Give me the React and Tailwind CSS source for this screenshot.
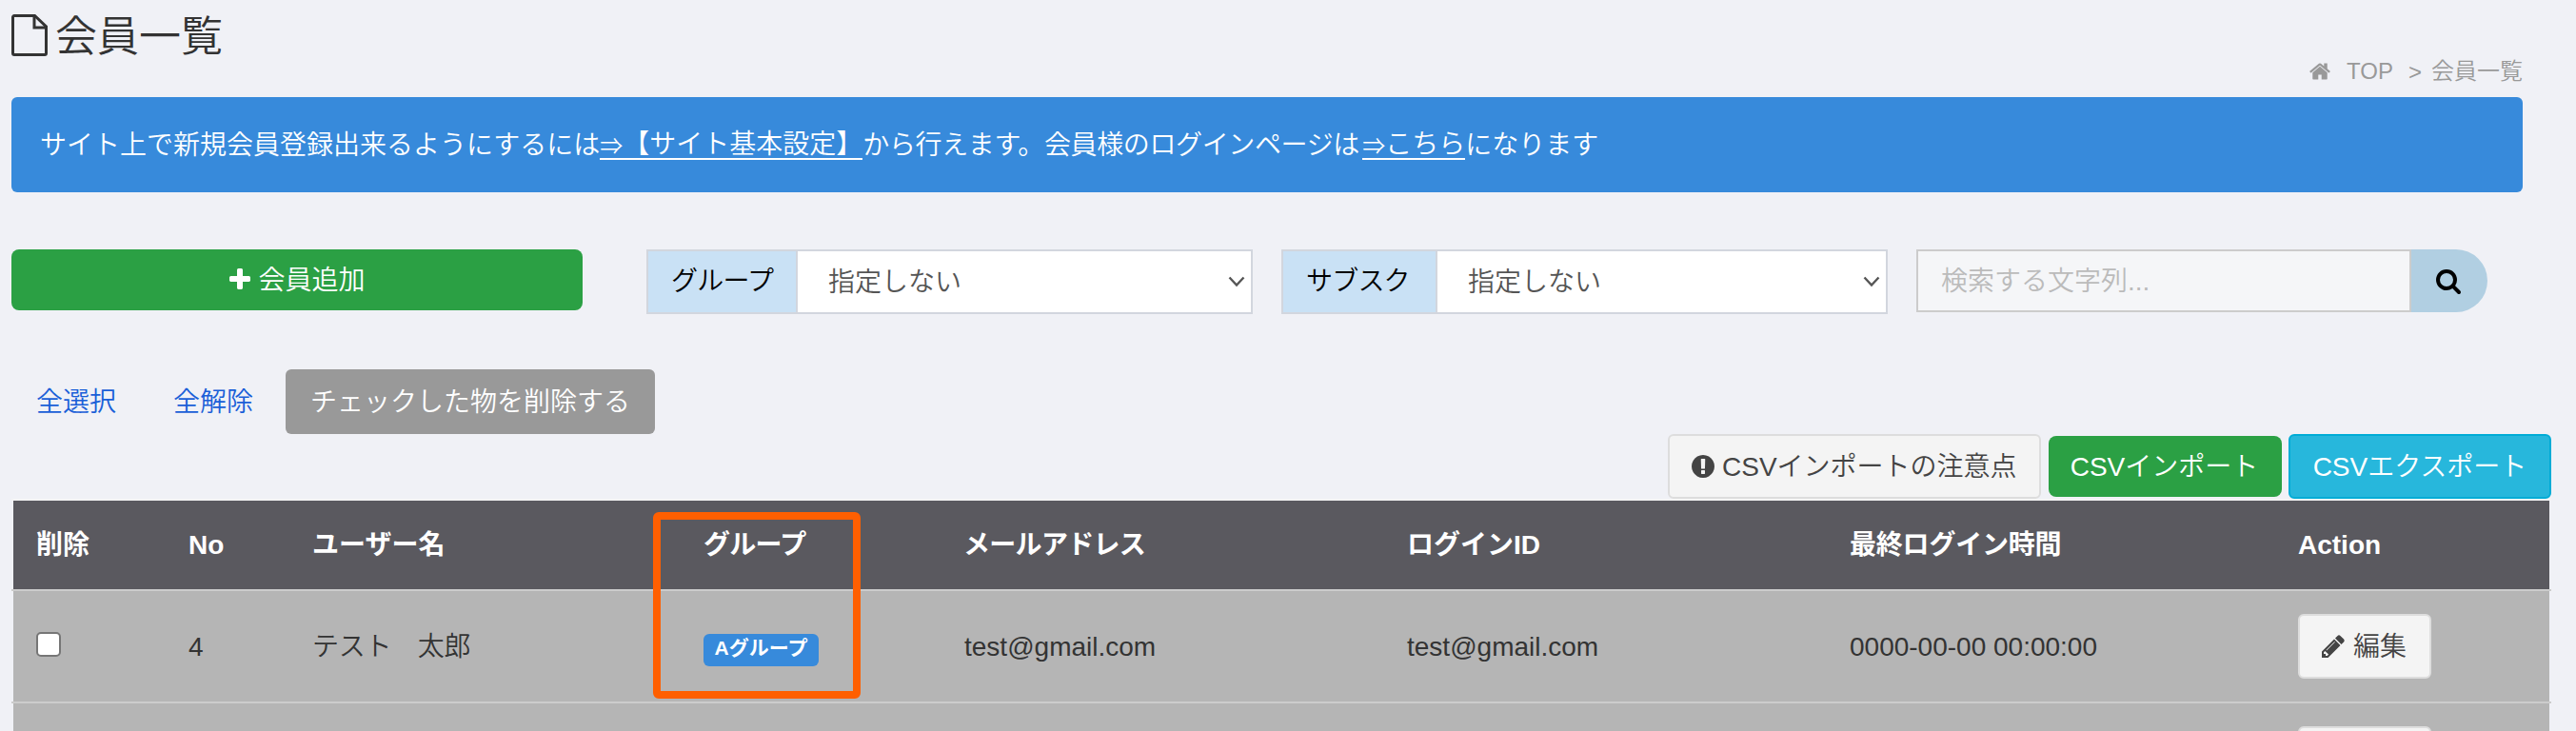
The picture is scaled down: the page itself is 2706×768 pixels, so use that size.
import React, { useState } from 'react';

const icons = {
    plus: 'M1600 736v192q0 40-28 68t-68 28h-416v416q0 40-28 68t-68 28h-192q-40 0-68-28t-28-68v-416h-416q-40 0-68-28t-28-68v-192q0-40 28-68t68-28h416v-416q0-40 28-68t68-28h192q40 0 68 28t28 68v416h416q40 0 68 28t28 68z',
    search: 'M1216 832q0-185-131.5-316.5t-316.5-131.5-316.5 131.5-131.5 316.5 131.5 316.5 316.5 131.5 316.5-131.5 131.5-316.5zm512 832q0 52-38 90t-90 38q-54 0-90-38l-343-342q-179 124-399 124-143 0-273.5-55.5t-225-150-150-225-55.5-273.5 55.5-273.5 150-225 225-150 273.5-55.5 273.5 55.5 225 150 150 225 55.5 273.5q0 220-124 399l343 343q37 37 37 90z',
    home: 'M1472 992v480q0 26-19 45t-45 19h-384v-384h-256v384h-384q-26 0-45-19t-19-45v-480q0-1 .5-3t.5-3l575-474 575 474q1 2 1 6zm223-69l-62 74q-8 9-21 11h-3q-13 0-21-7l-692-577-692 577q-12 8-24 7-13-2-21-11l-62-74q-8-10-7-23.5t11-21.5l719-599q32-26 76-26t76 26l244 204v-195q0-14 9-23t23-9h192q14 0 23 9t9 23v408l219 182q10 8 11 21.5t-7 23.5z',
    pencil: 'M491 1536l91-91-235-235-91 91v107h128v128h107zm523-928q0-22-22-22-10 0-17 7l-542 542q-7 7-7 17 0 22 22 22 10 0 17-7l542-542q7-7 7-17zm-54-192l416 416-832 832h-416v-416zm683 96q0 53-37 90l-166 166-416-416 166-165q36-38 90-38 53 0 91 38l235 234q37 39 37 91z',
    exclamation: 'M896 128q209 0 385.5 103t279.5 279.5 103 385.5-103 385.5-279.5 279.5-385.5 103-385.5-103-279.5-279.5-103-385.5 103-385.5 279.5-279.5 385.5-103zm128 1247v-190q0-14-9-23.5t-22-9.5h-192q-13 0-23 10t-10 23v190q0 13 10 23t23 10h192q13 0 22-9.5t9-23.5zm-2-344l18-621q0-12-10-18-10-8-24-8h-220q-14 0-24 8-10 6-10 18l17 621q0 10 10 17.5t24 7.5h185q14 0 23.5-7.5t10.5-17.5z'
};

const Icon = ({ name, className = 'size-7' }) => (
    <svg viewBox="0 0 1792 1792" fill="currentColor" className={`shrink-0 ${className}`}>
        <path d={icons[name]} />
    </svg>
);

const FilterSelect = ({ label, className, labelClassName }) => (
    <div className={`flex h-[68px] border-2 border-[#d2d6de] ${className}`}>
        <div className={`flex items-center border-r-2 border-[#d2d6de] bg-[#c9e1f5] pl-6 tracking-[-0.8px] whitespace-nowrap text-black ${labelClassName}`}>
            {label}
        </div>
        <div className="flex flex-1 items-center justify-between bg-white pr-1.5 pl-8 text-[#555]">
            <span className="pt-0.5">指定しない</span>
            <svg width="18" height="12" viewBox="0 0 18 12" fill="none" stroke="#555" strokeWidth="2.4">
                <path d="M1.5 1.5 9 9.5l7.5-8" />
            </svg>
        </div>
    </div>
);

const EditButton = ({ children }) => (
    <button
        type="button"
        className="flex h-[68px] w-[140px] items-center rounded-md border-2 border-[#ddd] bg-[#f4f4f4] pl-[21px] text-[#444]"
    >
        {children}
    </button>
);

const columns = 'grid grid-cols-[159px_131px_411px_274px_464px_465px_471px_1fr] pl-[25px]';

const App = () => {
    const [checked, setChecked] = useState(false);

    return (
        <div className="h-[768px] overflow-hidden bg-[#f0f1f6] font-['Liberation_Sans','Noto_Sans_CJK_JP',sans-serif] text-[28px] leading-10 font-[350] text-[#333]">
            <header className="flex h-[102px] justify-between pr-14 pl-3">
                <div className="flex items-start pt-[15px]">
                    <svg width="38" height="44" viewBox="0 0 38 44" fill="none" stroke="currentColor" strokeWidth="3">
                        <path d="M3 1.5h21.5L36.5 13v28a1.5 1.5 0 0 1-1.5 1.5H3A1.5 1.5 0 0 1 1.5 41V3A1.5 1.5 0 0 1 3 1.5Z" />
                        <path d="M24 1.5V14h12.5" />
                    </svg>
                    <h1 className="ml-2 pt-0.5 text-[44px] leading-[44px]">会員一覧</h1>
                </div>
                <nav className="flex items-center pt-[47px] text-2xl text-[#999]">
                    <Icon name="home" className="size-6" />
                    <span className="ml-4">TOP</span>
                    <span className="ml-4 pt-0.5">&gt;</span>
                    <span className="ml-[10px]">会員一覧</span>
                </nav>
            </header>

            <div className="mr-14 ml-3 flex h-[100px] items-center rounded-md bg-[#378adb] pt-0.5 pl-[30px] whitespace-nowrap text-white">
                <span>サイト上で新規会員登録出来るようにするには</span>
                <a href="#" className="flex h-[29px] items-center border-b-[2px] border-white">
                    <span className="w-6 pt-1 text-2xl">⇒</span>
                    <span>【サイト基本設定】</span>
                </a>
                <span className="w-[525px] tracking-[-0.37px]">から行えます。会員様のログインページは</span>
                <a href="#" className="flex h-[29px] items-center border-b-[2px] border-white">
                    <span className="w-6 pt-1 text-2xl">⇒</span>
                    <span>こちら</span>
                </a>
                <span>になります</span>
            </div>

            <div className="mt-[60px] flex h-[68px] items-start pl-3">
                <button type="button" className="flex h-16 w-[600px] items-center justify-center gap-[5px] rounded-lg bg-[#2ba044] pr-0.5 text-white">
                    <Icon name="plus" />
                    <span className="pt-px">会員追加</span>
                </button>
                <FilterSelect label="グループ" className="ml-[67px] w-[637px]" labelClassName="w-[157px]" />
                <FilterSelect label="サブスク" className="ml-[30px] w-[637px]" labelClassName="w-[162px]" />
                <div className="ml-[30px] flex h-[66px] w-[600px]">
                    <input
                        type="text"
                        placeholder="検索する文字列..."
                        className="w-[520px] border-2 border-[#ccc] bg-[#f5f6f8] pt-0.5 pl-6 placeholder:text-[#bbb] focus:outline-none"
                    />
                    <button type="button" className="flex flex-1 items-center rounded-r-[33px] bg-[#b1cfe2] pl-[25px] text-black">
                        <Icon name="search" />
                    </button>
                </div>
            </div>

            <div className="mt-[58px] flex h-[68px] items-center pl-[38px] text-[#1a5fd8]">
                <a href="#" className="pt-0.5">全選択</a>
                <a href="#" className="ml-[60px] pt-0.5">全解除</a>
                <button type="button" className="ml-[34px] h-[68px] w-[388px] rounded-md bg-[#999] pt-0.5 text-white">
                    チェックした物を削除する
                </button>
            </div>

            <div className="flex h-[68px] items-center justify-end pr-[26px] whitespace-nowrap">
                <button type="button" className="flex h-[68px] w-[392px] items-center rounded-md border-2 border-[#ddd] bg-[#f4f4f4] pl-[21px] text-[#444]">
                    <Icon name="exclamation" />
                    <span className="ml-[6px] pt-0.5">CSVインポートの注意点</span>
                </button>
                <button type="button" className="ml-2 h-16 w-[245px] rounded-lg bg-[#2ba044] pt-px pr-0.5 text-white">
                    CSVインポート
                </button>
                <button type="button" className="ml-[7px] h-[68px] w-[276px] rounded-md border-2 border-[#00acd6] bg-[#27b7dc] pt-px text-white">
                    CSVエクスポート
                </button>
            </div>

            <div className="relative mx-3 w-[2668px] border-t-2 border-[#f4f4f4]">
                <div className={`mx-0.5 h-[93px] items-center bg-[#5a595f] font-bold text-white ${columns}`}>
                    <span className="-ml-px">削除</span>
                    <span>No</span>
                    <span className="-ml-px">ユーザー名</span>
                    <span className="-ml-px tracking-[-0.7px]">グループ</span>
                    <span className="-ml-0.5 tracking-[-0.7px]">メールアドレス</span>
                    <span>ログインID</span>
                    <span className="tracking-[-0.2px]">最終ログイン時間</span>
                    <span>Action</span>
                </div>
                <div className="h-0.5 bg-[#ccc]" />
                <div className={`mx-0.5 h-[116px] items-center bg-[#b5b5b5] ${columns}`}>
                    <input
                        type="checkbox"
                        checked={checked}
                        onChange={(e) => setChecked(e.target.checked)}
                        className="-mt-1 -ml-px size-[26px] appearance-none rounded-[5px] border-2 border-[#767676] bg-white checked:bg-blue-600"
                    />
                    <span className="pt-0.5">4</span>
                    <span className="-ml-px pt-0.5 tracking-[-0.3px]">テスト　太郎</span>
                    <span className="mt-2 -ml-px flex h-[34px] w-[121px] items-center justify-center rounded-md bg-[#378adb] pb-1 text-[21px] font-bold text-white">
                        Aグループ
                    </span>
                    <span className="-ml-px pt-0.5">test@gmail.com</span>
                    <span className="pt-0.5">test@gmail.com</span>
                    <span className="pt-0.5">0000-00-00 00:00:00</span>
                    <EditButton>
                        <Icon name="pencil" />
                        <span className="ml-[7px] pt-px">編集</span>
                    </EditButton>
                </div>
                <div className="h-0.5 bg-[#ccc]" />
                <div className={`mx-0.5 h-[116px] items-center bg-[#b5b5b5] ${columns}`}>
                    <div className="col-start-8">
                        <EditButton />
                    </div>
                </div>

                {/* highlight frame around the group column */}
                <div className="pointer-events-none absolute top-[12px] left-[674px] h-[196px] w-[218px] rounded-md border-8 border-[#ff5f00]" />
            </div>
        </div>
    );
};

export default App;
